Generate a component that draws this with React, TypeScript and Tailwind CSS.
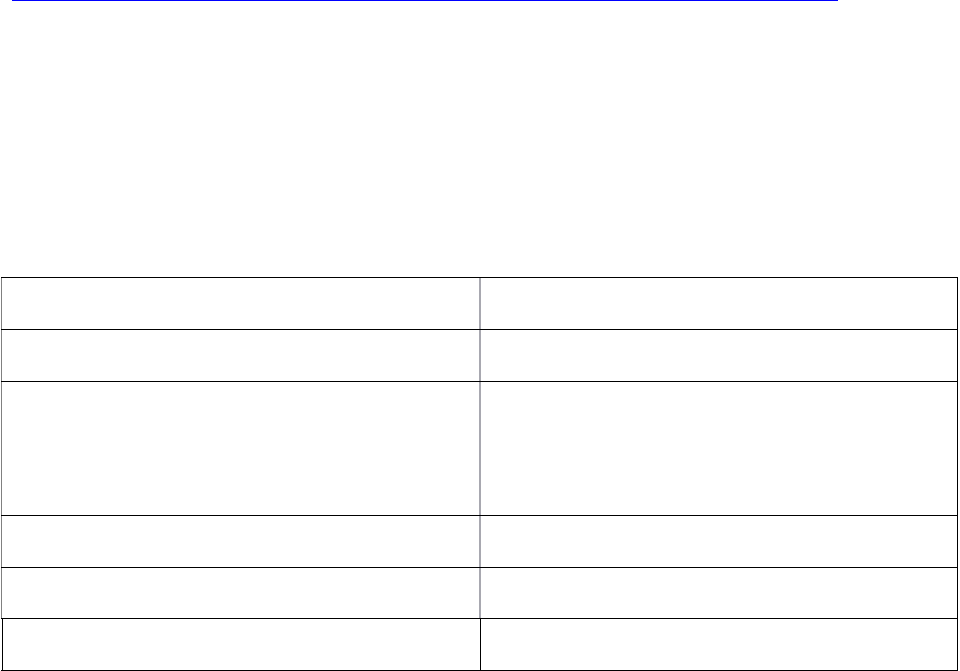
export default function App() {
  const rows = [52, 52, 134, 52, 51];
  return (
    <div className="w-[960px] h-[671px] bg-white overflow-hidden relative" style={{ fontFamily: '"Liberation Sans", Arial, sans-serif' }}>
      <div className="ml-[12px] w-[826px] h-px bg-[#0000ff]" />
      <div className="mt-[276px] ml-[1px] w-[957px] border-t border-black">
        {rows.map((h, i) => (
          <div key={i} className="flex border-b border-black" style={{ height: h }}>
            <div className="w-[478px] border-l border-[#808080] shrink-0" />
            <div className="w-[2px] bg-[#a8a8b0] shrink-0" />
            <div className="flex-1 border-r border-black" />
          </div>
        ))}
        <div className="flex border-b border-black h-[52px]">
          <div className="w-[1px] bg-white shrink-0" />
          <div className="w-[478px] border-l border-black shrink-0" />
          <div className="w-[1px] bg-black shrink-0" />
          <div className="flex-1 border-r border-black" />
        </div>
      </div>
    </div>
  );
}
